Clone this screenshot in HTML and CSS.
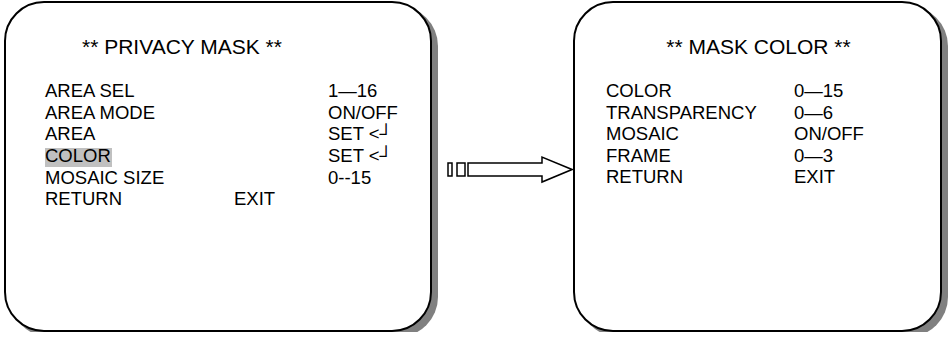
FILE: index.html
```html
<!DOCTYPE html>
<html lang="en">
<head>
  <meta charset="UTF-8" />
  <title>Privacy Mask Menu</title>
  <link rel="stylesheet" href="styles.css">
</head>
<body>

  <div class="diagram">
    <div class="screen screen-main">
      <h1 class="title">** PRIVACY MASK **</h1>
      <div class="menu menu-main">
        <span>AREA SEL</span><span></span><span>1—16</span>
        <span>AREA MODE</span><span></span><span>ON/OFF</span>
        <span>AREA</span><span></span><span>SET &lt;┘</span>
        <span><span class="sel">COLOR</span></span><span></span><span>SET &lt;┘</span>
        <span>MOSAIC SIZE</span><span></span><span>0--15</span>
        <span>RETURN</span><span>EXIT</span><span></span>
      </div>
    </div>

    <svg class="arrow" width="141" height="330" viewBox="432 1 141 330">
      <rect x="448" y="163" width="4" height="13" fill="#fff" stroke="#000" stroke-width="1.5"/>
      <rect x="457" y="163" width="8" height="13" fill="#fff" stroke="#000" stroke-width="1.5"/>
      <polygon points="468,163 542,163 542,157 572,169.5 542,182 542,176 468,176" fill="#fff" stroke="#000" stroke-width="1.5"/>
    </svg>

    <div class="screen screen-color">
      <h1 class="title title-center">** MASK COLOR **</h1>
      <div class="menu menu-color">
        <span>COLOR</span><span>0—15</span>
        <span>TRANSPARENCY</span><span>0—6</span>
        <span>MOSAIC</span><span>ON/OFF</span>
        <span>FRAME</span><span>0—3</span>
        <span>RETURN</span><span>EXIT</span>
      </div>
    </div>
  </div>

</body>
</html>
```

FILE: styles.css
```css
body {
  margin: 0;
  background-color: #fff;
  font-family: "Liberation Sans", Arial, sans-serif;
  color: #000;
}
.diagram {
  display: flex;
  align-items: flex-start;
  padding: 1px 0 0 4px;
}
.screen {
  box-sizing: border-box;
  height: 331px;
  border: 2px solid #000;
  border-radius: 40px;
  background-color: #fff;
  box-shadow: 6px 5px 0 #808080;
  padding-top: 32px;
}
.screen-main {
  width: 428px;
  padding-left: 76px;
}
.screen-color {
  width: 369px;
  padding-left: 31px;
}
.arrow {
  display: block;
  flex-shrink: 0;
}
.title {
  font-size: 21px;
  font-weight: normal;
  line-height: 24px;
  margin: 0 0 21px 0;
}
.title-center {
  text-align: center;
  padding-right: 29px;
}
.menu {
  display: grid;
  font-size: 18.5px;
  line-height: 21.6px;
  white-space: nowrap;
}
.menu-main {
  grid-template-columns: 189px 94px auto;
  margin-left: -37px;
}
.menu-color {
  grid-template-columns: 188px auto;
}
.sel {
  display: inline-block;
  background-color: #c0c0c0;
  line-height: 15px;
  padding: 0 1px 4px 0;
}
```
